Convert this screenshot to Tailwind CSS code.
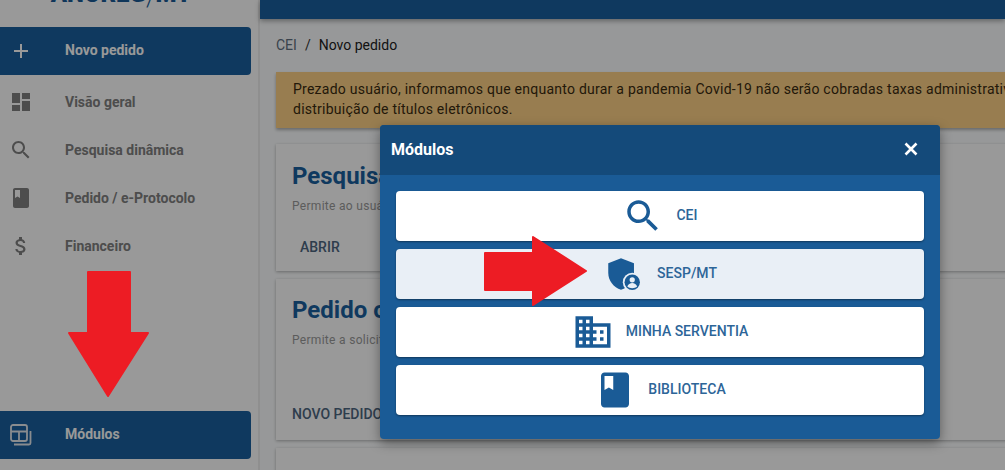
<!DOCTYPE html>
<html lang="pt-BR">
<head>
<meta charset="utf-8">
<title>Novo pedido</title>
<script src="https://cdn.jsdelivr.net/npm/@tailwindcss/browser@4"></script>
</head>
<body class="font-['Roboto',sans-serif]">
<div class="relative flex w-[1005px] h-[470px] overflow-hidden bg-[#fcfeff]">

  <!-- Sidebar -->
  <aside class="flex flex-col w-[260px] h-full shrink-0 bg-white border-r-2 border-[#eeeeee] text-[#808080]">
    <div class="flex items-end justify-center h-[27px] overflow-hidden pr-[16px] pb-[21px]">
      <span class="text-[24px] leading-none font-black text-[#1a5b96] whitespace-nowrap">ANOREG<span class="relative top-[4px] font-light">/</span>MT</span>
    </div>
    <a class="flex items-center h-[48px] w-[251px] rounded-r bg-[#1a5f9e] text-white">
      <span class="flex justify-center w-[42px] shrink-0 text-white">
        <svg class="size-6" viewBox="0 0 24 24" fill="currentColor"><path d="M19 13h-6v6h-2v-6H5v-2h6V5h2v6h6v2z"/></svg>
      </span>
      <span class="ml-[23px] pb-[2px] text-sm font-bold">Novo pedido</span>
    </a>
    <nav class="flex flex-col mt-[3px]">
      <a class="flex items-center h-[48px]">
        <span class="flex justify-center w-[42px] shrink-0">
          <svg class="size-6" viewBox="0 0 24 24" fill="currentColor"><path d="M3 13h8V3H3v10zm0 8h8v-6H3v6zm10 0h8V11h-8v10zm0-18v6h8V3h-8z"/></svg>
        </span>
        <span class="ml-[23px] text-sm font-bold">Visão geral</span>
      </a>
      <a class="flex items-center h-[48px]">
        <span class="flex justify-center w-[42px] shrink-0">
          <svg class="size-6" viewBox="0 0 24 24" fill="currentColor"><path d="M15.5 14h-.79l-.28-.27C15.41 12.59 16 11.11 16 9.5 16 5.91 13.09 3 9.5 3S3 5.91 3 9.5 5.91 16 9.5 16c1.61 0 3.09-.59 4.23-1.57l.27.28v.79l5 4.99L20.49 19l-4.99-5zm-6 0C7.01 14 5 11.99 5 9.5S7.01 5 9.5 5 14 7.01 14 9.5 11.99 14 9.5 14z"/></svg>
        </span>
        <span class="ml-[23px] text-sm font-bold">Pesquisa dinâmica</span>
      </a>
      <a class="flex items-center h-[48px]">
        <span class="flex justify-center w-[42px] shrink-0">
          <svg class="size-6" viewBox="0 0 24 24" fill="currentColor"><path d="M18 2H6c-1.1 0-2 .9-2 2v16c0 1.1.9 2 2 2h12c1.1 0 2-.9 2-2V4c0-1.1-.9-2-2-2zM6 4h5v8l-2.5-1.5L6 12V4z"/></svg>
        </span>
        <span class="ml-[23px] text-sm font-bold">Pedido / e-Protocolo</span>
      </a>
      <a class="flex items-center h-[48px]">
        <span class="flex justify-center w-[42px] shrink-0">
          <svg class="size-6" viewBox="0 0 24 24" fill="currentColor"><path d="M11.8 10.9c-2.27-.59-3-1.2-3-2.15 0-1.09 1.01-1.85 2.7-1.85 1.78 0 2.44.85 2.5 2.1h2.21c-.07-1.72-1.12-3.3-3.21-3.81V3h-3v2.16c-1.94.42-3.5 1.68-3.5 3.61 0 2.31 1.91 3.46 4.7 4.13 2.5.6 3 1.48 3 2.41 0 .69-.49 1.79-2.7 1.79-2.06 0-2.87-.92-2.98-2.1h-2.2c.12 2.19 1.76 3.42 3.68 3.83V21h3v-2.15c1.95-.37 3.5-1.5 3.5-3.55 0-2.84-2.43-3.81-4.7-4.4z"/></svg>
        </span>
        <span class="ml-[23px] text-sm font-bold">Financeiro</span>
      </a>
    </nav>
    <a class="flex items-center h-[48px] w-[251px] mt-auto mb-[11px] rounded-r bg-[#1a5f9e] text-white">
      <span class="flex justify-center w-[42px] shrink-0 text-[#e4e9ee]">
        <svg class="size-6" viewBox="0 0 24 24" fill="none" stroke="currentColor" stroke-width="1.8"><rect x="2" y="2" width="16" height="16" rx="2"/><path d="M2 8.5h16M10 8.5V18M21.5 8v12a1.5 1.5 0 0 1-1.5 1.5H5"/></svg>
      </span>
      <span class="ml-[23px] pb-[2px] text-sm font-bold">Módulos</span>
    </a>
  </aside>

  <!-- Main -->
  <div class="flex flex-col flex-1 min-w-0">
    <div class="h-[19px] shrink-0 bg-[#1a5f9e] shadow-[0_2px_5px_rgba(0,0,0,0.35)]"></div>
    <main class="flex flex-col pl-[16px]">
      <p class="mt-[17px] h-[19px] text-sm leading-[18px] whitespace-nowrap">
        <span class="text-[#5f6f80]">CEI</span><span class="mx-[8px] text-[#333333]">/</span><span class="text-[#212121]">Novo pedido</span>
      </p>
      <div class="mt-[17px] h-[56px] w-[760px] pl-[17px] pt-[7px] bg-[#fdd186] text-sm leading-[20px] tracking-[0.25px] text-[#3a2a10] whitespace-nowrap shadow-[0_2px_3px_rgba(0,0,0,0.3)]">
        Prezado usuário, informamos que enquanto durar a pandemia Covid-19 não serão cobradas taxas administrativas para<br>distribuição de títulos eletrônicos.
      </div>
      <section class="mt-[16px] h-[127px] w-[760px] pl-[16px] pt-[18px] bg-white shadow-[0_1px_3px_rgba(0,0,0,0.3)]">
        <h2 class="text-2xl leading-[28px] font-bold text-[#1a5f9e]">Pesquisa dinâmica</h2>
        <p class="mt-[8px] text-xs leading-[16px] tracking-[0.3px] text-[#9a9a9a]">Permite ao usuário pesquisar</p>
        <span class="block mt-[23px] ml-[8px] text-sm font-medium text-[#4d6680]">ABRIR</span>
      </section>
      <section class="mt-[8px] h-[161px] w-[760px] pl-[16px] pt-[17px] bg-white shadow-[0_1px_3px_rgba(0,0,0,0.3)]">
        <h2 class="text-2xl leading-[28px] font-bold text-[#1a5f9e]">Pedido online</h2>
        <p class="mt-[8px] text-xs leading-[16px] tracking-[0.3px] text-[#9a9a9a]">Permite a solicitação</p>
        <span class="block mt-[56px] text-sm font-medium text-[#4d6680]">NOVO PEDIDO</span>
      </section>
      <section class="mt-[8px] h-[60px] w-[760px] bg-white shadow-[0_1px_3px_rgba(0,0,0,0.3)]"></section>
    </main>
  </div>

  <!-- Backdrop -->
  <div class="absolute inset-0 bg-black/40"></div>

  <!-- Modal -->
  <div class="absolute left-[380px] top-[125px] w-[560px] h-[314px] rounded overflow-hidden bg-[#1a5b96] shadow-[0_4px_12px_rgba(0,0,0,0.4)]">
    <header class="flex items-center justify-between h-[50px] pl-[11px] pr-[18px] bg-[#144a7a] text-white">
      <h3 class="text-base font-bold">Módulos</h3>
      <svg class="size-[22px] mb-[3px]" viewBox="0 0 22 22" fill="none" stroke="currentColor" stroke-width="2.6"><path d="M5.5 5.5l11 11M16.5 5.500l-11 11"/></svg>
    </header>
    <div class="flex flex-col gap-2 px-4 pt-4">
      <button class="flex items-center justify-center gap-3 h-[50px] rounded bg-white text-[#1a5b96] shadow-[0_1px_2px_rgba(0,0,0,0.4)]">
        <svg class="size-[42px]" viewBox="0 0 24 24" fill="currentColor"><path d="M15.5 14h-.79l-.28-.27C15.41 12.59 16 11.11 16 9.5 16 5.91 13.09 3 9.5 3S3 5.91 3 9.5 5.91 16 9.5 16c1.61 0 3.09-.59 4.23-1.57l.27.28v.79l5 4.99L20.49 19l-4.99-5zm-6 0C7.01 14 5 11.99 5 9.5S7.01 5 9.5 5 14 7.01 14 9.5 11.99 14 9.5 14z"/></svg>
        <span class="pb-[2px] text-sm font-medium text-[#2d6598]">CEI</span>
      </button>
      <button class="flex items-center justify-center gap-3 h-[50px] rounded bg-[#e9eff6] text-[#1a5b96] shadow-[0_1px_2px_rgba(0,0,0,0.4)]">
        <svg class="size-[42px]" viewBox="0 0 24 24" fill="currentColor">
          <path d="M10.3 3L3 5.9v5.400c0 4.500 3 8.400 7.300 9.700 4.300-1.300 7.400-5.200 7.400-9.700V5.900z"/>
          <circle cx="16.700" cy="16.700" r="5.400" fill="#e9eff6"/>
          <circle cx="16.700" cy="16.700" r="4.400"/>
          <circle cx="16.700" cy="15.300" r="1.500" fill="#e9eff6"/>
          <path d="M13.900 19.100c.4-1.200 1.600-1.900 2.800-1.900s2.400.7 2.800 1.900c-.7.6-1.700 1-2.800 1s-2.100-.4-2.800-1z" fill="#e9eff6"/>
        </svg>
        <span class="pb-[2px] text-sm font-medium text-[#2d6598]">SESP/MT</span>
      </button>
      <button class="flex items-center justify-center gap-3 h-[50px] rounded bg-white text-[#1a5b96] shadow-[0_1px_2px_rgba(0,0,0,0.4)]">
        <svg class="size-[42px]" viewBox="0 0 24 24" fill="currentColor"><path d="M12 7V3H2v18h20V7H12zM6 19H4v-2h2v2zm0-4H4v-2h2v2zm0-4H4V9h2v2zm0-4H4V5h2v2zm4 12H8v-2h2v2zm0-4H8v-2h2v2zm0-4H8V9h2v2zm0-4H8V5h2v2zm10 12h-8v-2h2v-2h-2v-2h2v-2h-2V9h8v10zm-2-8h-2v2h2v-2zm0 4h-2v2h2v-2z"/></svg>
        <span class="pb-[2px] text-sm font-medium text-[#2d6598]">MINHA SERVENTIA</span>
      </button>
      <button class="flex items-center justify-center gap-3 h-[50px] rounded bg-white text-[#1a5b96] shadow-[0_1px_2px_rgba(0,0,0,0.4)]">
        <svg class="size-[42px]" viewBox="0 0 24 24" fill="currentColor"><path d="M18 2H6c-1.1 0-2 .9-2 2v16c0 1.1.9 2 2 2h12c1.1 0 2-.9 2-2V4c0-1.1-.9-2-2-2zM6 4h5v8l-2.5-1.5L6 12V4z"/></svg>
        <span class="pb-[2px] text-sm font-medium text-[#2d6598]">BIBLIOTECA</span>
      </button>
    </div>
  </div>

  <!-- Red annotation arrows -->
  <svg class="absolute left-[60px] top-[265px] w-[100px] h-[140px]" viewBox="0 0 100 140" fill="#ed1c24" stroke="#ed1c24" stroke-width="2" stroke-linejoin="round"><path d="M28 7h42v61h18L48 131 9 68h19z"/></svg>
  <svg class="absolute left-[478px] top-[230px] w-[115px] h-[82px]" viewBox="0 0 115 82" fill="#ed1c24" stroke="#ed1c24" stroke-width="2" stroke-linejoin="round"><path d="M7 23h48V7l53 34-53 34V60H7z"/></svg>
</div>
</body>
</html>
